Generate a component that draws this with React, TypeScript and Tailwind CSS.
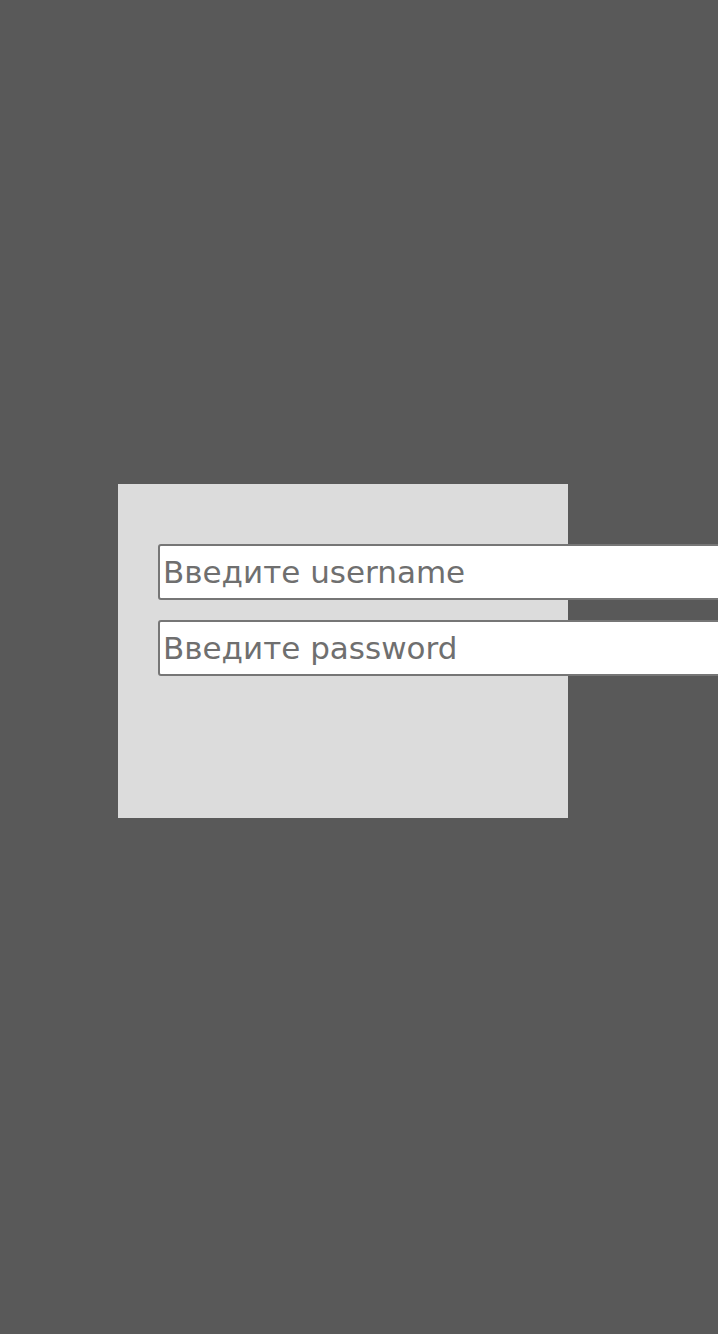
import React from "react";

export default function App() {
  return (
    <div className="h-[1334px] w-full bg-[#595959] overflow-hidden pt-[484px] pl-[118px] font-['DejaVu_Sans',sans-serif]">
      <div className="w-[450px] h-[334px] bg-[#dcdcdc] pt-[60px] pl-[40px] flex flex-col gap-[20px]">
        <input
          type="text"
          placeholder="Введите username"
          className="shrink-0 w-[600px] h-[56px] bg-white border-2 border-[#767676] rounded-[3px] px-[3px] text-[31px] text-[#333] placeholder:text-[#6f6f6f] outline-none font-['DejaVu_Sans',sans-serif]"
        />
        <input
          type="password"
          placeholder="Введите password"
          className="shrink-0 w-[600px] h-[56px] bg-white border-2 border-[#767676] rounded-[3px] px-[3px] text-[31px] text-[#333] placeholder:text-[#6f6f6f] outline-none font-['DejaVu_Sans',sans-serif]"
        />
      </div>
    </div>
  );
}
